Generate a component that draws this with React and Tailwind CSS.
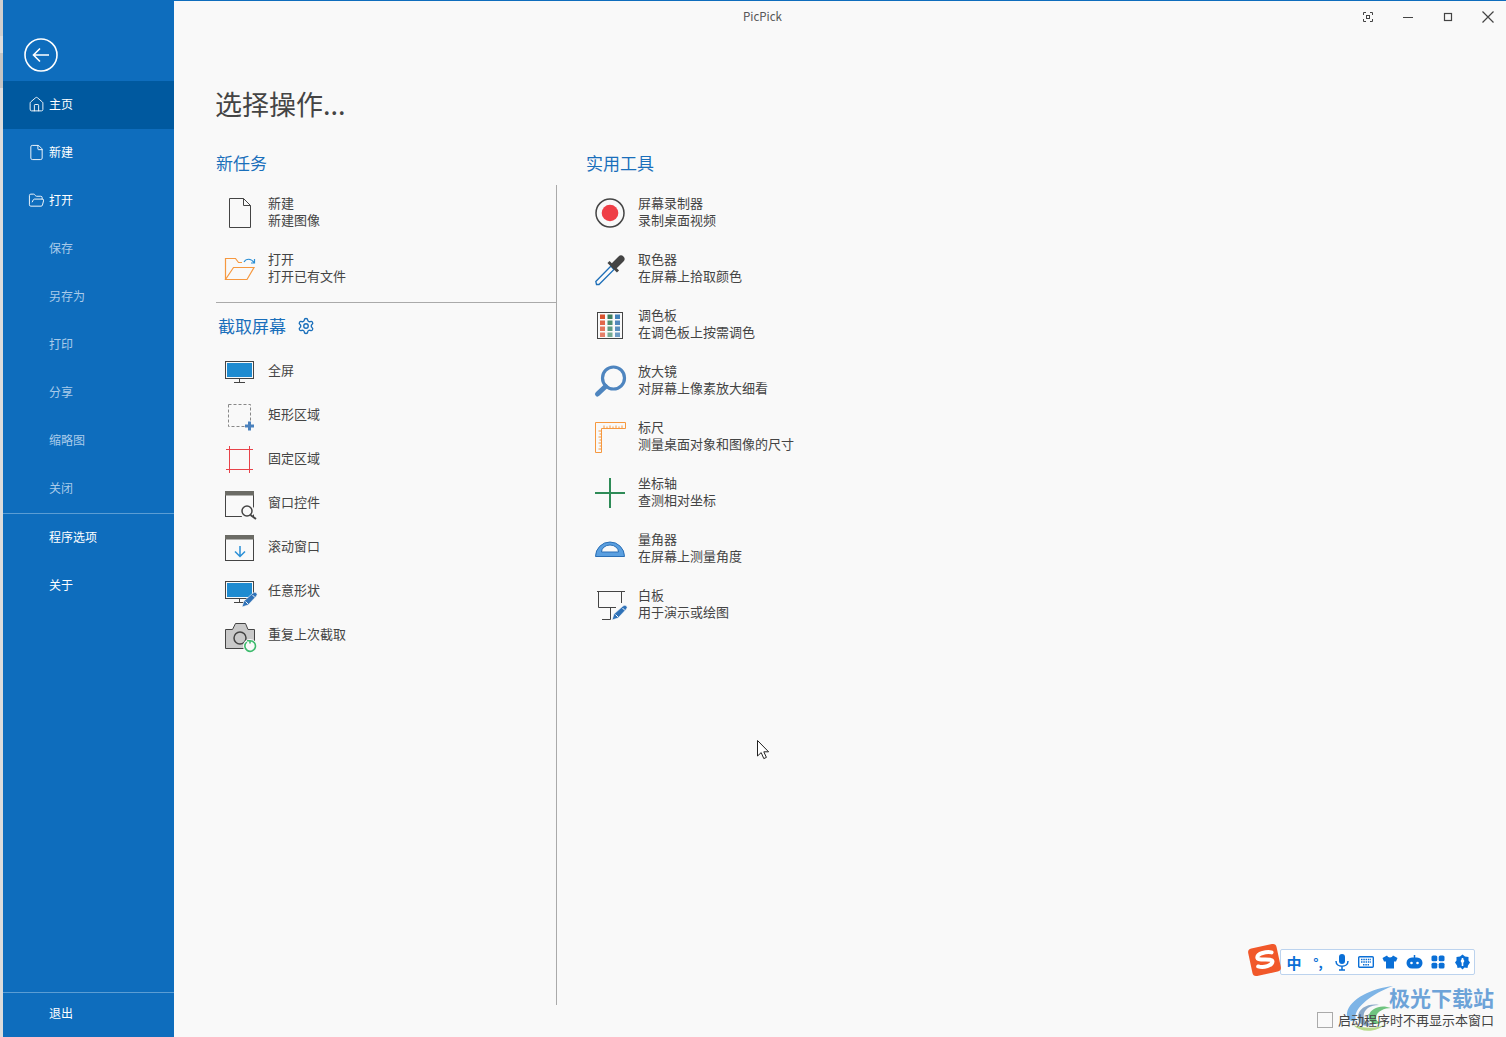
import { Home, File, FolderOpen, Settings } from 'lucide-react';

const FONT = 'font-["Noto_Sans_CJK_SC","Noto_Sans",sans-serif]';

const navTop = [
  { label: '主页', icon: Home, active: true },
  { label: '新建', icon: File },
  { label: '打开', icon: FolderOpen },
  { label: '保存', dim: true },
  { label: '另存为', dim: true },
  { label: '打印', dim: true },
  { label: '分享', dim: true },
  { label: '缩略图', dim: true },
  { label: '关闭', dim: true },
];

const Ico = ({ children }) => (
  <svg width="32" height="32" viewBox="0 0 32 32" fill="none" className="overflow-visible">
    {children}
  </svg>
);

const Pen = ({ x = 0, y = 0 }) => (
  <g transform={`translate(${x} ${y})`}>
    <path d="M1 15 L3 9 L12 1 Q14 -.5 15.5 1 Q17 2.5 15 4.5 L7 13 Z" fill="#2f72b8" stroke="#f9f9f9" strokeWidth=".6" />
    <path d="M4.5 9.5 L7 12 M11.5 3 L14 5.5" stroke="#f9f9f9" strokeWidth="1" />
  </g>
);

const Monitor = () => (
  <>
    <rect x="1.5" y="6.5" width="28" height="17" stroke="#444" fill="#f9f9f9" />
    <rect x="3" y="8" width="25" height="14" fill="#1e8bd0" />
    <path d="M15.5 24V27M10 27.5H21" stroke="#444" />
  </>
);

const WindowFrame = ({ children }) => (
  <>
    <rect x="1.5" y="4.5" width="28" height="25" stroke="#444" />
    <rect x="1" y="4" width="29" height="4.5" fill="#6b6b65" />
    {children}
  </>
);

const newTasks = [
  {
    title: '新建', sub: '新建图像',
    icon: <Ico><path d="M5.5 1.5H19.5L26.5 8.5V30.5H5.5Z M19.5 1.5V8.5H26.5" stroke="#444" /></Ico>,
  },
  {
    title: '打开', sub: '打开已有文件',
    icon: (
      <Ico>
        <path d="M1.5 26.5V5.5H11.5L14.5 9.5H18M1.5 26.5L9.5 14.5H30L23 26.5Z" stroke="#f6983f" strokeWidth="1.2" />
        <path d="M20 9C22 5.5 27 5 30 9.5M30.5 6V10H27" stroke="#2a8fd6" strokeWidth="1.2" />
      </Ico>
    ),
  },
];

const captures = [
  { title: '全屏', icon: <Ico><Monitor /></Ico> },
  {
    title: '矩形区域',
    icon: (
      <Ico>
        <rect x="4.5" y="5.5" width="22" height="22" stroke="#888" strokeDasharray="3 2" />
        <path d="M21 27H30M25.5 22.5V31.5" stroke="#4a81bd" strokeWidth="3" />
      </Ico>
    ),
  },
  {
    title: '固定区域',
    icon: <Ico><path d="M5.5 3V30M25.5 3V30M2 6.5H29M2 26.5H29" stroke="#e8434a" /></Ico>,
  },
  {
    title: '窗口控件',
    icon: (
      <Ico>
        <WindowFrame />
        <circle cx="23" cy="24" r="7.5" fill="#f9f9f9" />
        <circle cx="23" cy="24" r="5" stroke="#444" strokeWidth="1.5" />
        <path d="M26.5 28L32 32" stroke="#444" strokeWidth="2" />
      </Ico>
    ),
  },
  {
    title: '滚动窗口',
    icon: (
      <Ico>
        <WindowFrame />
        <path d="M16 15V25.5M11 20.5L16 25.5L21 20.5" stroke="#2a8fd6" strokeWidth="1.5" />
      </Ico>
    ),
  },
  { title: '任意形状', icon: <Ico><Monitor /><Pen x={17} y={17} /></Ico> },
  {
    title: '重复上次截取',
    icon: (
      <Ico>
        <path d="M1.5 10.5H8.5L11.5 4.5H21.5L24 10.5H30.5V29.5H1.5Z" fill="#c9c9c9" stroke="#444" />
        <circle cx="16" cy="19" r="6" stroke="#444" strokeWidth="1.5" />
        <circle cx="26" cy="27" r="7" fill="#f9f9f9" />
        <path d="M22.8 23A5.3 5.3 0 1 0 26 21.8V24.5M26 21.8H23" stroke="#3dbb6d" strokeWidth="1.6" />
      </Ico>
    ),
  },
];

const paletteColors = [
  ['#d9512c', '#3c7e5f', '#3f7fb8'],
  ['#e2664a', '#4f8f73', '#5288bb'],
  ['#e5755c', '#5f9c83', '#5b8fbd'],
  ['#e5806a', '#74ab95', '#6e9cc4'],
];

const tools = [
  {
    title: '屏幕录制器', sub: '录制桌面视频',
    icon: <Ico><circle cx="16" cy="16" r="14" stroke="#444" strokeWidth="1.5" /><circle cx="16" cy="16" r="8.3" fill="#ef3e46" /></Ico>,
  },
  {
    title: '取色器', sub: '在屏幕上拾取颜色',
    icon: (
      <Ico>
        <path d="M2.5 31.5L1.8 28.5L17 13L20 16.5L5 31.5Z" fill="#f9f9f9" stroke="#1e6fb8" strokeWidth="1.3" />
        <path d="M14.5 9L24 18.5" stroke="#444" strokeWidth="3" />
        <path d="M21 12L27 6" stroke="#444" strokeWidth="7" strokeLinecap="round" />
      </Ico>
    ),
  },
  {
    title: '调色板', sub: '在调色板上按需调色',
    icon: (
      <Ico>
        <rect x="3.5" y="3.5" width="25" height="26" stroke="#444" />
        {paletteColors.map((row, r) =>
          row.map((c, i) => <rect key={`${r}-${i}`} x={6 + i * 7.5} y={5.5 + r * 6} width="5" height="4.5" fill={c} />),
        )}
      </Ico>
    ),
  },
  {
    title: '放大镜', sub: '对屏幕上像素放大细看',
    icon: (
      <Ico>
        <circle cx="19.5" cy="13" r="11" stroke="#4e85bf" strokeWidth="3.2" />
        <path d="M11.5 21.5L3.5 29" stroke="#4e85bf" strokeWidth="5" strokeLinecap="round" />
      </Ico>
    ),
  },
  {
    title: '标尺', sub: '测量桌面对象和图像的尺寸',
    icon: (
      <Ico>
        <path d="M1.5 1.5H31.5V7.5H7.5V31.5H1.5Z" stroke="#f6983f" />
        <path d="M10 7V4.5M13 7V5.5M16 7V4.5M19 7V5.5M22 7V4.5M25 7V5.5M28 7V4.5M7 10H4.5M7 13H5.5M7 16H4.5M7 19H5.5M7 22H4.5M7 25H5.5M7 28H4.5" stroke="#f6983f" />
      </Ico>
    ),
  },
  {
    title: '坐标轴', sub: '查测相对坐标',
    icon: <Ico><path d="M16 1V31M1 16H31" stroke="#2e8b57" strokeWidth="2" /></Ico>,
  },
  {
    title: '量角器', sub: '在屏幕上测量角度',
    icon: (
      <Ico>
        <path d="M1.5 23.5A14.5 14.5 0 0 1 30.5 23.5Z" fill="#5a9fe0" stroke="#2a6fb5" />
        <path d="M7.5 19A8.5 7 0 0 1 24.5 19Z" fill="#f9f9f9" stroke="#2a6fb5" />
      </Ico>
    ),
  },
  {
    title: '白板', sub: '用于演示或绘图',
    icon: (
      <Ico>
        <path d="M3 2.5H31M4.5 2.5V18.5H22M27.5 2.5V14M16.5 18.5V30.5H8" stroke="#444" />
        <Pen x={17} y={16} />
      </Ico>
    ),
  },
];

function NavRow({ item }) {
  const Icon = item.icon;
  return (
    <div className={`relative flex h-12 items-center pb-[2px] pl-[46px] text-xs ${item.active ? 'bg-[#00599f]' : ''} ${item.dim ? 'text-[#a9cbea]' : 'text-white'}`}>
      {Icon && <Icon size={17} strokeWidth={1.3} className="absolute left-[25px]" />}
      {item.label}
    </div>
  );
}

function ActionRow({ item, tall }) {
  return (
    <div className={`flex items-center ${tall ? 'h-14' : 'h-11'}`}>
      <div className="flex w-12 shrink-0 justify-center">{item.icon}</div>
      <div className="ml-1 pb-1 text-[13px] leading-[17px] text-[#444]">
        <div>{item.title}</div>
        {item.sub && <div>{item.sub}</div>}
      </div>
    </div>
  );
}

function SogouBar() {
  return (
    <div className="absolute left-[1250px] top-[945px] flex items-center">
      <div className="absolute left-0 top-[1px] z-10 flex h-[28px] w-[29px] -rotate-12 items-center justify-center rounded-[4px] bg-[#f1582a]">
        <svg width="22" height="20" viewBox="0 0 22 20" fill="none">
          <path d="M19 4C14 2 5 2 4 6C3 10 18 9 18 13C17 17 8 18 3 15" stroke="#fff" strokeWidth="4" strokeLinecap="round" />
        </svg>
      </div>
      <div className="ml-[30px] mt-[4px] flex h-[26px] w-[195px] items-center rounded-[2px] border border-[#bcd3ee] bg-white pl-px text-[#0a6fd6]">
        <span className="flex w-6 justify-center text-[15px] font-bold leading-none">中</span>
        <span className="flex w-6 justify-center text-[13px] font-bold leading-none">°,</span>
        <span className="flex w-6 justify-center">
          <svg width="16" height="18" viewBox="0 0 16 18" fill="none">
            <rect x="5" y="1" width="6" height="10" rx="3" fill="#0a6fd6" />
            <path d="M2 8C2 15 14 15 14 8M8 13V17M5 17H11" stroke="#0a6fd6" strokeWidth="1.5" />
          </svg>
        </span>
        <span className="flex w-6 justify-center">
          <svg width="16" height="14" viewBox="0 0 16 14" fill="none">
            <rect x=".7" y="1.7" width="14.6" height="10.6" rx="1" stroke="#0a6fd6" strokeWidth="1.4" />
            <path d="M3 4.5H13M3 7H13M5 9.8H11" stroke="#0a6fd6" strokeWidth="1.5" strokeDasharray="1.5 .8" />
          </svg>
        </span>
        <span className="flex w-6 justify-center">
          <svg width="16" height="14" viewBox="0 0 16 14">
            <path d="M5 0.5L0.5 3L2 6.5H4V13.5H12V6.5H14L15.5 3L11 0.5C10 3 6 3 5 0.5Z" fill="#0a6fd6" />
          </svg>
        </span>
        <span className="flex w-6 justify-center">
          <svg width="17" height="14" viewBox="0 0 17 14">
            <rect x="0.5" y="2.5" width="16" height="11" rx="5.5" fill="#0a6fd6" />
            <path d="M8.5 0V3" stroke="#0a6fd6" strokeWidth="1.5" />
            <circle cx="5.5" cy="8" r="1.3" fill="#fff" />
            <circle cx="11.5" cy="8" r="1.3" fill="#fff" />
          </svg>
        </span>
        <span className="flex w-6 justify-center">
          <svg width="14" height="14" viewBox="0 0 14 14" fill="#0a6fd6">
            <rect x="0.5" y="0.5" width="5.8" height="5.8" rx="1.6" />
            <rect x="7.7" y="0.5" width="5.8" height="5.8" rx="1.6" />
            <rect x="0.5" y="7.7" width="5.8" height="5.8" rx="1.6" />
            <rect x="7.7" y="7.7" width="5.8" height="5.8" rx="1.6" />
          </svg>
        </span>
        <span className="flex w-6 justify-center">
          <svg width="15" height="16" viewBox="0 0 15 16" fill="#0a6fd6">
            <path d="M7.5 0.5L10 2.5L13.5 3L13.5 6.5L15 8.5L13 11.5L12.5 14L9.5 13.5L7.5 15.5L5.5 13.5L2.5 14L2 11.5L0 8.5L1.5 6.5L1.5 3L5 2.5Z" />
            <path d="M7.5 4V12" stroke="#fff" strokeWidth="1.6" />
            <circle cx="7.5" cy="7" r="1.8" fill="#fff" />
          </svg>
        </span>
      </div>
    </div>
  );
}

function Watermark() {
  return (
    <div className="pointer-events-none absolute left-[1345px] top-[983px] h-[52px] w-[155px]">
      <svg width="62" height="50" viewBox="0 0 62 50" fill="none" className="absolute left-0 top-[2px]">
        <path d="M48 1C28 3 4 14 2 28C1 35 7 38 11 35C7 25 24 10 48 1Z" fill="#7db4e6" />
        <path d="M13 32C13 23 24 18 34 20C24 20 17 26 19 33C20 37 24 40 30 38C22 44 13 40 13 32Z" fill="#8aa9c9" />
        <path d="M24 30C26 23 36 19 46 23C40 23 31 26 31 33C31 37 35 38 38 36C32 42 22 38 24 30Z" fill="#6fc47f" />
        <path d="M8 40C16 48 32 48 42 38C34 44 20 44 8 40Z" fill="#b8d98a" />
      </svg>
      <span className="absolute left-[44px] top-0 whitespace-nowrap text-[21px] font-bold leading-[28px] text-[#6da3d8]">极光下载站</span>
    </div>
  );
}

function WindowButtons() {
  return (
    <div className="ml-auto flex items-center gap-7 pr-3 text-[#444]">
      <svg width="12" height="12" viewBox="0 0 12 12" fill="none" stroke="#444">
        <path d="M1.5 4V1.5H4M8 1.5H10.5V4M10.5 8V10.5H8M4 10.5H1.5V8" />
        <rect x="4.5" y="4.5" width="3" height="3" />
      </svg>
      <svg width="12" height="12" viewBox="0 0 12 12" fill="none" stroke="#444"><path d="M1 6.5H11" /></svg>
      <svg width="12" height="12" viewBox="0 0 12 12" fill="none" stroke="#444" strokeWidth="1.2"><rect x="2.5" y="2.5" width="7" height="7" /></svg>
      <svg width="12" height="12" viewBox="0 0 12 12" fill="none" stroke="#444" strokeWidth="1.2"><path d="M0.5 0.5L11.5 11.5M11.5 0.5L0.5 11.5" /></svg>
    </div>
  );
}

export default function App() {
  return (
    <div className={`relative flex h-[1037px] w-[1506px] overflow-hidden bg-[#f9f9f9] ${FONT}`}>
      {/* window edge behind the app */}
      <div className="flex w-[3px] shrink-0 flex-col bg-[#dcdcdc]">
        <div className="h-[36px] bg-[#cfcfcf]" />
        <div className="mt-[17px] h-[35px] bg-[#c4c4c4]" />
      </div>

      <aside className="flex w-[171px] shrink-0 flex-col bg-[#0e6dbd]">
        <div className="flex h-[81px] items-end pb-[9px] pl-[21px]">
          <svg width="34" height="34" viewBox="0 0 34 34" fill="none" stroke="#fff">
            <circle cx="17" cy="17" r="16" strokeWidth="1.6" />
            <path d="M25 17H9.5M16 10.5L9.5 17L16 23.5" strokeWidth="1.6" />
          </svg>
        </div>
        {navTop.map((item) => <NavRow key={item.label} item={item} />)}
        <div className="border-b border-[#5b9dd4]" />
        <NavRow item={{ label: '程序选项' }} />
        <NavRow item={{ label: '关于' }} />
        <div className="mt-auto flex h-[45px] items-start border-t border-[#5b9dd4] pl-[46px] pt-[11px] text-xs leading-[18px] text-white">退出</div>
      </aside>

      <main className="flex min-w-0 flex-1 flex-col border-t border-[#0e6dbd]">
        <header className="flex h-[31px] shrink-0 items-center text-[11.5px] text-[#555]">
          <span className="ml-[569px]">PicPick</span>
          <WindowButtons />
        </header>

        <h1 className="ml-[41px] mt-[47px] flex h-[50px] shrink-0 items-center text-[27px] font-normal text-[#444]">选择操作...</h1>

        <div className="ml-[42px] mt-[19px] mb-[7px] flex h-[30px] shrink-0 items-center text-[17px] text-[#1a6fbb]">
          <span className="w-[370px]">新任务</span>
          <span>实用工具</span>
        </div>

        <div className="ml-[42px] flex h-[820px] shrink-0">
          <section className="w-[341px] border-r border-[#aaa]">
            {newTasks.map((item) => <ActionRow key={item.title} item={item} tall />)}
            <div className="mt-[5px] w-[340px] border-b border-[#aaa]" />
            <div className="ml-[2px] flex h-[46px] items-center gap-[11px] text-[17px] text-[#1a6fbb]">
              截取屏幕
              <Settings size={18} strokeWidth={1.8} />
            </div>
            {captures.map((item) => <ActionRow key={item.title} item={item} />)}
          </section>
          <section className="pl-[29px]">
            {tools.map((item) => <ActionRow key={item.title} item={item} tall />)}
          </section>
        </div>

        <div className="relative z-10 mt-[7px] flex items-center justify-end pr-3 text-[13px] leading-4 text-[#444]">
          <span className="mr-[5px] h-4 w-4 border border-[#aaa]" />
          启动程序时不再显示本窗口
        </div>
      </main>

      <SogouBar />
      <Watermark />

      {/* mouse pointer */}
      <svg width="14" height="20" viewBox="0 0 14 20" className="absolute left-[757px] top-[740px]" fill="#fff" stroke="#222">
        <path d="M.5.5V16L4.2 12.6L6.8 18.6L9.4 17.4L6.8 11.8H11.6Z" />
      </svg>
    </div>
  );
}
